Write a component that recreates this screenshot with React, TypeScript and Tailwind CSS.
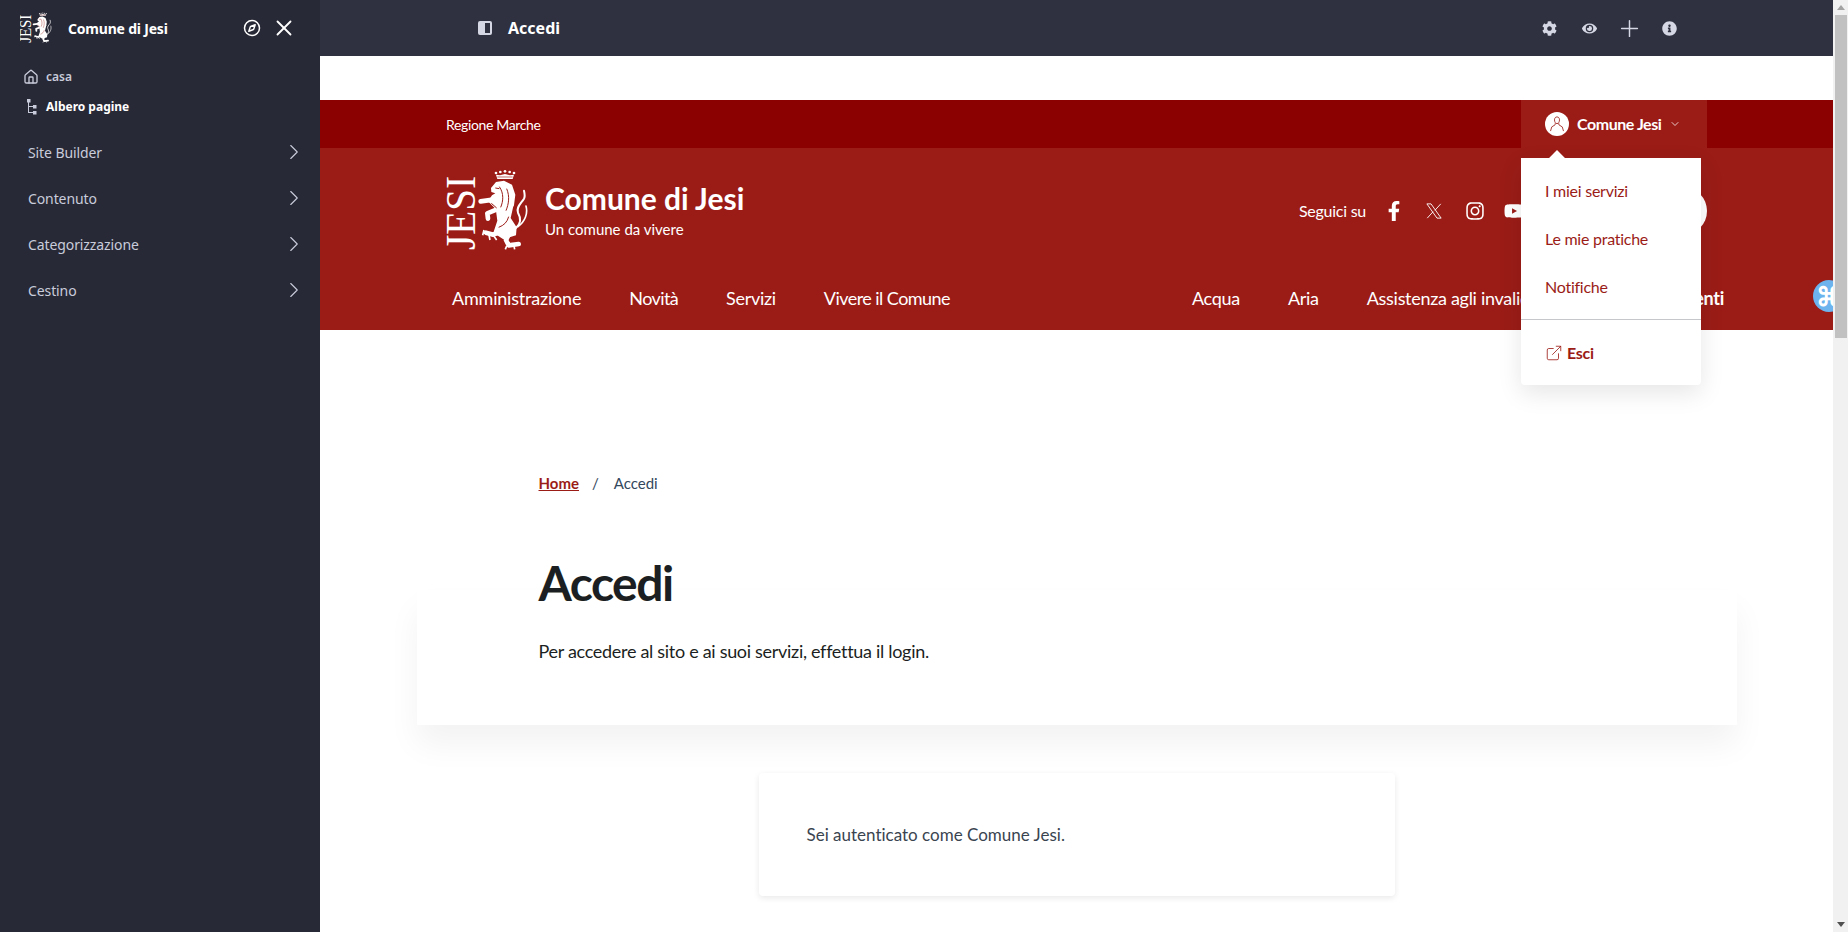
import React from 'react';
import { ChevronRight, ChevronDown, Compass, X, House, Plus, ExternalLink } from 'lucide-react';
import { FaCog, FaEye, FaInfoCircle, FaFacebookF, FaInstagram, FaYoutube } from 'react-icons/fa';

const Logo = ({ className }: { className?: string }) => (
  <svg viewBox="0 0 82 84" className={className} fill="white">
    <text
      transform="translate(29 81) rotate(-90)"
      fontFamily="'Liberation Serif', serif"
      fontSize="42"
      textLength="74"
      lengthAdjust="spacingAndGlyphs"
    >
      JESI
    </text>
    <g transform="translate(-6 -5) scale(0.3333)">
      {/* corona */}
      <path d="M168 32 L180 34 L195 30 L210 34 L222 32 L218 45 L172 45 Z" />
      <circle cx="168" cy="27" r="4" />
      <circle cx="181" cy="24" r="4" />
      <circle cx="195" cy="22" r="4" />
      <circle cx="209" cy="24" r="4" />
      <circle cx="222" cy="27" r="4" />
      <path d="M172 39 H218" stroke="#9b1c17" strokeWidth="2" />
      {/* testa e criniera */}
      <path d="M153 72 L168 54 L192 50 L216 62 L226 92 L222 124 L208 146 L172 140 L144 112 L156 94 L166 88 L154 84 Z" />
      {/* corpo */}
      <path d="M166 125 L222 118 L212 162 L230 190 L228 214 L190 226 L160 206 L172 170 Z" />
      {/* zampe */}
      <path d="M165 106 L122 112" fill="none" stroke="white" strokeWidth="14" strokeLinecap="round" />
      <path d="M176 134 L142 148 L144 164" fill="none" stroke="white" strokeWidth="14" strokeLinecap="round" strokeLinejoin="round" />
      <path d="M180 204 L160 212 L138 206" fill="none" stroke="white" strokeWidth="14" strokeLinecap="round" strokeLinejoin="round" />
      <path d="M132 198 L128 214 M146 208 L150 228 M160 214 L170 228" fill="none" stroke="white" strokeWidth="5" />
      <path d="M208 208 L198 228 L206 244 L236 240" fill="none" stroke="white" strokeWidth="14" strokeLinecap="round" strokeLinejoin="round" />
      <path d="M200 246 L196 256 M222 246 L224 256" fill="none" stroke="white" strokeWidth="5" />
      {/* coda */}
      <path d="M228 192 C244 178 242 160 234 146 C228 130 242 120 252 104 C256 96 254 88 252 80" fill="none" stroke="white" strokeWidth="6" strokeLinecap="round" />
      <path d="M234 188 C256 172 264 148 258 126" fill="none" stroke="white" strokeWidth="5" strokeLinecap="round" />
      {/* dettagli */}
      <path d="M178 68 C192 88 190 112 182 130 M200 74 C210 98 206 120 198 140 M176 190 C192 184 202 174 206 158 M166 72 L178 74 M154 118 L170 132" fill="none" stroke="#9b1c17" strokeWidth="3" />
    </g>
  </svg>
);

const sideItems = ['Site Builder', 'Contenuto', 'Categorizzazione', 'Cestino'];

const Sidebar = () => (
  <aside className="h-full w-[320px] shrink-0 bg-[#282936] font-['Noto_Sans',sans-serif] text-[#c9ccdb]">
    <div className="flex h-14 items-center pl-5 pr-[23px]">
      <Logo className="h-8 w-8 shrink-0" />
      <span className="ml-4 text-[14px] font-bold tracking-[-0.2px] text-white">Comune di Jesi</span>
      <Compass className="ml-auto h-[18px] w-[18px] text-white" strokeWidth={2} />
      <X className="ml-[10px] h-[26px] w-[26px] text-white" strokeWidth={1.7} />
    </div>
    <div className="mt-1.5 flex h-[30px] items-center gap-[7px] pl-[23px] text-[12px] font-semibold">
      <House className="h-4 w-4" strokeWidth={2} />
      casa
    </div>
    <div className="flex h-[30px] items-center gap-[7px] pl-[23px] text-[12px] font-bold text-white">
      <svg viewBox="0 0 16 16" className="h-4 w-4" fill="#c9ccdb">
        <rect x="4" y="0" width="3.5" height="3.5" />
        <rect x="10" y="6" width="3.5" height="3.5" />
        <rect x="10" y="12" width="3.5" height="3.5" />
        <path d="M5 3h1v4h4v1H6v5h4v1H5z" />
      </svg>
      Albero pagine
    </div>
    <div className="mt-[7px] flex flex-col">
      {sideItems.map((item) => (
        <div key={item} className="flex h-[46px] items-center justify-between pl-7 pr-[13px] text-[14px] tracking-[-0.1px]">
          {item}
          <ChevronRight className="h-[26px] w-[26px]" strokeWidth={1} />
        </div>
      ))}
    </div>
  </aside>
);

const TopBar = () => (
  <div className="flex h-14 items-center bg-[#2f3140] pl-[158px] pr-[156px] font-['Noto_Sans',sans-serif] text-[#d5d7e4]">
    <span className="flex h-[14px] w-[14px] justify-end rounded-[2px] bg-[#d5d7e4] p-[2px]">
      <span className="w-[5px] bg-[#2f3140]" />
    </span>
    <span className="ml-4 text-[16px] font-bold text-white">Accedi</span>
    <div className="ml-auto flex items-center">
      <FaCog className="h-[15px] w-[15px]" />
      <FaEye className="ml-[25px] h-[15px] w-[15px]" />
      <Plus className="ml-[19px] h-[27px] w-[27px]" strokeWidth={1.3} />
      <FaInfoCircle className="ml-[19px] h-[15px] w-[15px]" />
    </div>
  </div>
);

const UserMenu = () => (
  <div className="relative h-12 w-[186px] bg-[#9b1c17]">
    <div className="flex h-12 items-center pl-6 text-white">
      <span className="flex h-6 w-6 items-center justify-center rounded-full bg-white">
        <svg viewBox="0 0 24 24" className="h-5 w-5" fill="none" stroke="#9b1c17" strokeWidth="1">
          <path d="M12 3.5c-2 0-3 1.6-3 3.6 0 2.2 1.2 4.4 3 4.4s3-2.2 3-4.4c0-2-1-3.6-3-3.6z" />
          <path d="M10 11l-.3 2-4 2.5-1.5 5M14 11l.3 2 4 2.5 1.5 5" />
        </svg>
      </span>
      <span className="ml-2 text-[16px] font-bold tracking-[-0.45px]">Comune Jesi</span>
      <ChevronDown className="ml-2 h-3 w-3" strokeWidth={1.5} />
    </div>
    <div className="absolute left-0 top-[58px] z-20 w-[180px] rounded-b-[4px] bg-white pt-[9px] text-[16px] tracking-[-0.25px] text-[#9b1c17] shadow-[0_8px_24px_rgba(0,0,0,0.1)]">
      <span className="absolute left-[29px] top-[-5px] h-3.5 w-3.5 rotate-45 bg-white" />
      <div className="flex h-12 items-center pl-6">I miei servizi</div>
      <div className="flex h-12 items-center pl-6">Le mie pratiche</div>
      <div className="flex h-12 items-center pl-6">Notifiche</div>
      <div className="mt-2 border-t border-[#c5c7cb]" />
      <div className="flex h-[65px] items-center pl-6">
        <ExternalLink className="h-[18px] w-[18px]" strokeWidth={1.1} />
        <span className="ml-1 font-bold">Esci</span>
      </div>
    </div>
  </div>
);

const Header = () => (
  <header className="relative text-white">
    <div className="flex h-12 items-center justify-between bg-[#8b0000] px-[126px]">
      <span className="text-[14px] tracking-[-0.35px]">Regione Marche</span>
      <UserMenu />
    </div>
    <div className="bg-[#9b1c17]">
      <div className="flex h-[126px] items-center px-[126px]">
        <Logo className="h-[84px] w-[82px] shrink-0" />
        <div className="ml-[17px]">
          <div className="mt-[-4px] text-[30px] font-bold leading-[36px]">Comune di Jesi</div>
          <div className="mt-[3px] text-[15px] leading-[20px]">Un comune da vivere</div>
        </div>
        <div className="ml-auto flex items-center">
          <span className="text-[16px] tracking-[-0.25px]">Seguici su</span>
          <FaFacebookF className="ml-[18px] h-[20px] w-[20px]" />
          <svg viewBox="0 0 24 24" className="ml-[21px] h-[18px] w-[18px]" fill="none" stroke="white" strokeWidth="1.2">
            <path d="M2.5 2.5h5.5l13.5 19H16z" />
            <path d="M21 2.5l-7.8 8.6M3 21.5l7.8-8.6" />
          </svg>
          <FaInstagram className="ml-[22px] h-[20px] w-[20px]" />
          <FaYoutube className="ml-[19px] h-[20px] w-[20px]" />
          <span className="ml-[135px] h-12 w-12 rounded-full bg-white" />
        </div>
      </div>
      <div className="relative flex h-[56px] items-center justify-between pb-2 pl-[132px] pr-[109px] text-[18px] tracking-[-0.3px]">
        <nav className="flex gap-12">
          <span className="tracking-[-0.2px]">Amministrazione</span>
          <span className="tracking-[-0.6px]">Novità</span>
          <span>Servizi</span>
          <span className="tracking-[-0.55px]">Vivere il Comune</span>
        </nav>
        <nav className="flex gap-12">
          <span>Acqua</span>
          <span>Aria</span>
          <span>Assistenza agli invalidi</span>
          <span className="ml-[2px] font-bold">Tutti gli argomenti</span>
        </nav>
        <span className="absolute right-[-12px] top-[6px] flex h-8 w-8 items-center justify-center rounded-full bg-[#6db3ee] text-[26px] font-bold leading-none text-white">
          ⌘
        </span>
      </div>
    </div>
  </header>
);

const Scrollbar = () => (
  <div className="flex h-full w-[15px] shrink-0 flex-col items-center bg-[#f1f1f1]">
    <span className="mt-[5px] h-0 w-0 border-x-[4px] border-b-[5px] border-x-transparent border-b-[#a3a3a3]" />
    <span className="mt-[5px] h-[323px] w-[12px] bg-[#c1c1c1]" />
    <span className="mb-[5px] mt-auto h-0 w-0 border-x-[4px] border-t-[5px] border-x-transparent border-t-[#505050]" />
  </div>
);

const App = () => (
  <div className="flex h-screen overflow-hidden bg-white font-[Lato,sans-serif] [font-variant-ligatures:none]">
    <Sidebar />
    <main className="min-w-0 flex-1 overflow-hidden">
      <TopBar />
      <div className="h-11 bg-white" />
      <Header />
      <section className="relative isolate mx-auto w-[1320px] bg-white pb-[60px] pl-[122px] pt-[141px] before:absolute before:inset-x-0 before:bottom-0 before:-z-10 before:h-[135px] before:shadow-[0_20px_30px_0_rgba(0,0,0,0.05)]">
        <div className="flex items-center text-[15px] leading-6 text-[#33485c]">
          <span className="font-bold text-[#9b1c17] underline">Home</span>
          <span className="ml-[13px]">/</span>
          <span className="ml-[15px]">Accedi</span>
        </div>
        <h1 className="mt-[59px] text-[48px] font-bold leading-[58px] tracking-[-1.5px] text-[#1c1f22]">Accedi</h1>
        <p className="mt-[25px] text-[18px] leading-7 tracking-[-0.3px] text-[#1c1f22]">
          Per accedere al sito e ai suoi servizi, effettua il login.
        </p>
      </section>
      <div className="mx-auto mt-12 flex h-[123px] w-[636px] items-center rounded-[4px] bg-white pl-12 text-[17px] text-[#3a4450] shadow-[0_2px_6px_rgba(0,0,0,0.09)]">
        Sei autenticato come Comune Jesi.
      </div>
    </main>
    <Scrollbar />
  </div>
);

export default App;
